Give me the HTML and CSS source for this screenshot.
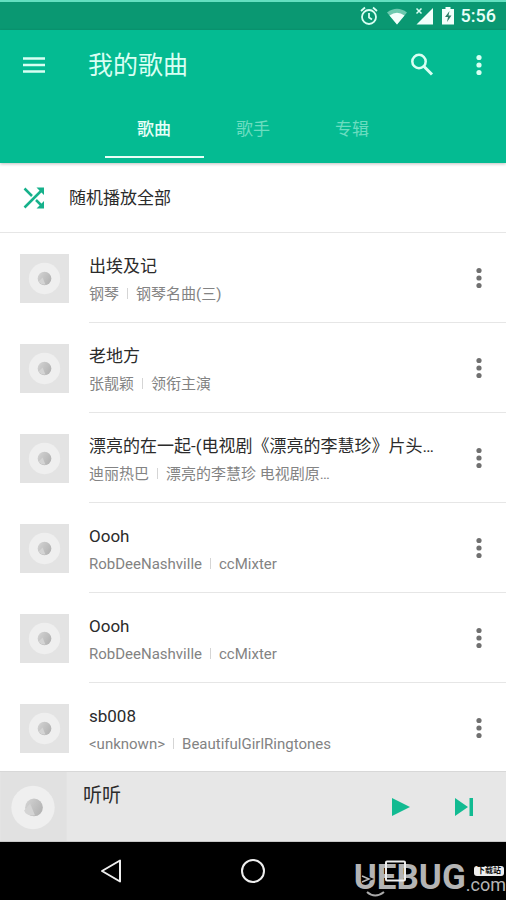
FILE: index.html
```html
<!DOCTYPE html>
<html lang="zh-CN">
<head>
<meta charset="utf-8">
<meta name="viewport" content="width=device-width, initial-scale=1">
<title>我的歌曲</title>
<link rel="stylesheet" href="styles.css">
</head>
<body>
<svg class="defs" aria-hidden="true">
  <defs>
    <linearGradient id="core" x1="0" y1="0" x2="1" y2="0.6">
      <stop offset="0" stop-color="#d6d6d6"/>
      <stop offset="0.5" stop-color="#c4c4c4"/>
      <stop offset="1" stop-color="#b4b4b4"/>
    </linearGradient>
    <symbol id="disc" viewBox="0 0 50 50">
      <rect width="50" height="50" fill="#e3e3e3"/>
      <circle cx="25" cy="25" r="16" fill="#efefef"/>
      <circle cx="25" cy="25" r="7" fill="url(#core)"/>
      <path d="M19 28l4-4 3 7a7 7 0 0 1-7-3z" fill="#d4d4d4"/>
    </symbol>
    <symbol id="more" viewBox="0 0 24 24">
      <circle cx="12" cy="4.500" r="2.600"/><circle cx="12" cy="12" r="2.600"/><circle cx="12" cy="19.500" r="2.600"/>
    </symbol>
  </defs>
</svg>
<div class="screen">
  <div class="status">
    <svg width="20" height="20" viewBox="0 0 20 20" fill="none" stroke="#d9fff3" stroke-width="1.800"><circle cx="10" cy="11" r="7"/><path d="M10 7v4.500l3 2M2 5l4-3.500M18 5l-4-3.500"/></svg>
    <svg width="22" height="20" viewBox="0 0 22 20"><path d="M1 6.500Q11-1 21 6.500L11 18.500z" fill="#6cc9ae"/><path d="M3.500 9.500Q11 4 18.500 9.500L11 18.500z" fill="#f2fffb"/></svg>
    <svg width="20" height="20" viewBox="0 0 20 20"><path d="M18 2v16.500H1.500z" fill="#f2fffb"/><path d="M1 2l6 6M7 2L1 8" stroke="#0a9872" stroke-width="4"/><path d="M1.500 2.500l5 5M6.500 2.500l-5 5" stroke="#d9fff3" stroke-width="1.500"/></svg>
    <svg width="12" height="20" viewBox="0 0 12 20"><path d="M3.500 1h5v2H12v15.500H0V3h3.500z" fill="#f2fffb"/><path d="M7.500 5L3 11h3l-1 5 4.500-6.500H6.500z" fill="#2b7e68"/></svg>
    <time>5:56</time>
  </div>
  <header>
    <div class="bar">
      <button class="menu" aria-label="菜单"><svg width="24" height="24" viewBox="0 0 24 24" stroke="#d9fff3" stroke-width="2.400"><path d="M1 5.500h22M1 12h22M1 18.500h22"/></svg></button>
      <h1>我的歌曲</h1>
      <button class="search" aria-label="搜索"><svg width="24" height="24" viewBox="0 0 24 24" fill="none" stroke="#d9fff3"><circle cx="9" cy="8.500" r="6.700" stroke-width="2.500"/><path d="M13.500 13l8.500 8.500" stroke-width="3"/></svg></button>
      <button class="dots light" aria-label="更多"><svg width="24" height="24"><use href="#more"/></svg></button>
    </div>
    <nav class="tabs">
      <a href="#songs" class="active">歌曲</a>
      <a href="#artists">歌手</a>
      <a href="#albums">专辑</a>
    </nav>
  </header>
  <main>
    <button class="shuffle">
      <svg width="24" height="24" viewBox="0 0 24 24" fill="none" stroke="#16b18b" stroke-width="2.500"><path d="M2.500 2.500l7.500 7.500M2.500 21.500L20 4M14 14l6 6"/><path d="M14.500 1.500H22V9zM22 15v7.500h-7.500z" fill="#16b18b" stroke="none"/></svg>
      <span>随机播放全部</span>
    </button>
    <ul>
      <li><svg class="cover"><use href="#disc"/></svg><div class="row"><div class="info"><h2>出埃及记</h2><p><span>钢琴</span><span>钢琴名曲(三)</span></p></div><button class="dots" aria-label="更多"><svg width="24" height="24"><use href="#more"/></svg></button></div></li>
      <li><svg class="cover"><use href="#disc"/></svg><div class="row"><div class="info"><h2>老地方</h2><p><span>张靓颖</span><span>领衔主演</span></p></div><button class="dots" aria-label="更多"><svg width="24" height="24"><use href="#more"/></svg></button></div></li>
      <li><svg class="cover"><use href="#disc"/></svg><div class="row"><div class="info"><h2>漂亮的在一起-(电视剧《漂亮的李慧珍》片头…</h2><p><span>迪丽热巴</span><span>漂亮的李慧珍 电视剧原…</span></p></div><button class="dots" aria-label="更多"><svg width="24" height="24"><use href="#more"/></svg></button></div></li>
      <li><svg class="cover"><use href="#disc"/></svg><div class="row"><div class="info"><h2>Oooh</h2><p><span>RobDeeNashville</span><span>ccMixter</span></p></div><button class="dots" aria-label="更多"><svg width="24" height="24"><use href="#more"/></svg></button></div></li>
      <li><svg class="cover"><use href="#disc"/></svg><div class="row"><div class="info"><h2>Oooh</h2><p><span>RobDeeNashville</span><span>ccMixter</span></p></div><button class="dots" aria-label="更多"><svg width="24" height="24"><use href="#more"/></svg></button></div></li>
      <li><svg class="cover"><use href="#disc"/></svg><div class="row"><div class="info"><h2>sb008</h2><p><span>&lt;unknown&gt;</span><span>BeautifulGirlRingtones</span></p></div><button class="dots" aria-label="更多"><svg width="24" height="24"><use href="#more"/></svg></button></div></li>
    </ul>
  </main>
  <section class="player">
    <svg class="art" viewBox="0 0 67 70"><rect width="67" height="70" fill="#e1e1e1"/><circle cx="33" cy="36" r="22" fill="#efefef"/><circle cx="34" cy="36" r="9" fill="url(#core)"/><path d="M24 39l6-7 5 12q-9 1-11-5z" fill="#d4d4d4"/></svg>
    <strong>听听</strong>
    <button aria-label="播放"><svg width="20" height="20" viewBox="0 0 20 20" fill="#12bb92"><path d="M1 1l18 9-18 9z"/></svg></button>
    <button aria-label="下一首"><svg width="20" height="20" viewBox="0 0 20 20" fill="#12bb92"><path d="M1 1l13 9-13 9zM15.500 1H19v18h-3.500z"/></svg></button>
  </section>
  <nav class="system">
    <button aria-label="返回"><svg width="24" height="26" viewBox="0 0 24 26" fill="none" stroke="#eee" stroke-width="2" stroke-linejoin="round"><path d="M21 2.500v21L3 13z"/></svg></button>
    <button aria-label="主页"><svg width="24" height="26" viewBox="0 0 24 26" fill="none" stroke="#eee" stroke-width="2"><circle cx="12" cy="13" r="11"/></svg></button>
    <button aria-label="最近"><svg width="24" height="26" viewBox="0 0 24 26" fill="none" stroke="#eee" stroke-width="2"><rect x="3" y="3.500" width="19" height="19" rx="1"/></svg></button>
    <div class="mark"><b>UEBUG</b><div><small>下载站</small><span>.com</span></div>
      <svg class="face" width="34" height="24" viewBox="0 0 34 24" fill="none"><path d="M8 2l7 3-7 3" stroke="#000" stroke-width="4"/><path d="M8 2l7 3-7 3" stroke="#bbb" stroke-width="1.500"/><path d="M13 18q8 7 17 0" stroke="#aaa" stroke-width="2"/></svg>
    </div>
  </nav>
</div>
</body>
</html>
```
FILE: styles.css
```css
* { box-sizing: border-box; margin: 0; padding: 0; }
body { background: #fff; color: #2b2b2b; font-family: Roboto, "Noto Sans CJK SC", sans-serif; }
button { display: flex; align-items: center; justify-content: center; border: 0; background: none; font: inherit; color: inherit; cursor: pointer; flex: none; }
a { color: inherit; text-decoration: none; }
svg { display: block; flex: none; }
ul { list-style: none; }
.defs { position: absolute; width: 0; height: 0; }
.screen { display: flex; flex-direction: column; min-height: 100vh; }

.status { display: flex; align-items: center; justify-content: flex-end; gap: 7px; height: 30px; padding-right: 10px; background: #0a9872; border-top: 2px solid #63e0c0; color: #e8fff8; }
.status time { font-size: 18px; line-height: 24px; font-weight: 500; }

header { background: #04bb92; color: #d9fff3; box-shadow: 0 1px 3px rgba(0, 0, 0, .25); }
.bar { display: flex; align-items: center; height: 70px; padding: 0 14px 0 22px; }
.bar h1 { flex: 1; margin-left: 42px; padding-top: 2px; font-size: 25px; line-height: 36px; font-weight: 400; }
.menu { width: 24px; height: 48px; }
.search { width: 48px; height: 48px; margin-right: 20px; }
.dots { width: 26px; height: 48px; fill: #707070; }
.light { fill: #d9fff3; }
.tabs { display: flex; justify-content: center; height: 63px; padding-bottom: 5px; }
.tabs a { width: 99px; display: flex; align-items: center; justify-content: center; padding-top: 2px; border-bottom: 2px solid transparent; font-size: 17px; line-height: 24px; color: #6bddc0; }
.tabs .active { border-color: #e8fff8; color: #e8fff8; font-weight: 500; }

main { flex: 1; }
.shuffle { width: 100%; height: 70px; justify-content: flex-start; padding: 0 22px; gap: 23px; border-bottom: 1px solid #e6e6e6; font-size: 17px; line-height: 26px; }
/* The player bar slightly covers the end of the list. */
ul { margin-bottom: -2px; }
li { display: flex; align-items: center; height: 90px; padding-left: 20px; }
.cover { width: 49px; height: 49px; }
.row { flex: 1; min-width: 0; display: flex; align-items: center; height: 90px; margin-left: 20px; padding-right: 14px; border-bottom: 1px solid #e6e6e6; }
li:last-child .row { border-bottom-color: transparent; }
.info { flex: 1; min-width: 0; padding-top: 4px; }
h2 { font-size: 17px; line-height: 28px; font-weight: 400; white-space: nowrap; }
.info p { display: flex; font-size: 15px; line-height: 28px; color: #838383; white-space: nowrap; }
.info p span + span { display: flex; align-items: center; }
.info p span + span::before { content: ""; width: 1px; height: 11px; margin: 0 8px; background: #d5d5d5; }

.player { position: relative; display: flex; align-items: center; height: 71px; padding-right: 18px; background: #e7e7e7; border-top: 1px solid #d8d8d8; border-bottom: 1px solid #c8c8c8; }
.art { width: 67px; height: 69px; }
.player strong { flex: 1; align-self: flex-start; margin: 10px 0 0 16px; font-size: 19px; line-height: 28px; font-weight: 400; }
.player button { width: 48px; height: 48px; margin-left: 15px; }

.system { position: relative; display: flex; justify-content: center; align-items: center; gap: 94px; height: 58px; background: #000; }
.system button { position: relative; z-index: 1; width: 48px; height: 48px; }
.mark { position: absolute; right: 0; bottom: 6px; display: flex; align-items: flex-end; color: #b4b4b4; }
.mark b { font-size: 35px; line-height: 32px; font-weight: 700; }
.mark div { display: flex; flex-direction: column; align-items: flex-end; }
.mark small { margin-right: 2px; padding: 0 3px; border-radius: 3px; background: #eee; color: #111; font-size: 8px; line-height: 10px; font-weight: 700; }
.mark span { font-size: 18px; line-height: 18px; }
.face { position: absolute; left: 0; bottom: -4px; }
```
